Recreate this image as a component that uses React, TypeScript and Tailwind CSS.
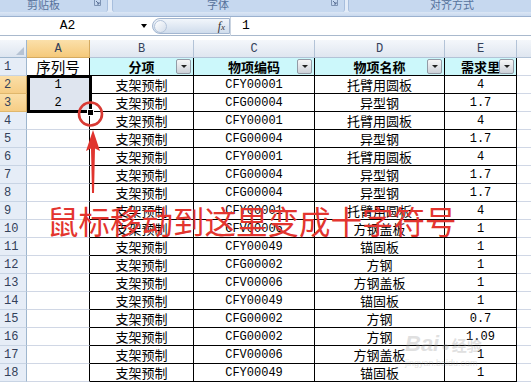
import React from 'react'

const cjk = "[font-family:'Noto_Sans_CJK_SC',sans-serif]"
const mono = "[font-family:'Liberation_Mono','Noto_Sans_CJK_SC',monospace]"

const rows = [
  ['支架预制', 'CFY00001', '托臂用圆板', '4'],
  ['支架预制', 'CFG00004', '异型钢', '1.7'],
  ['支架预制', 'CFY00001', '托臂用圆板', '4'],
  ['支架预制', 'CFG00004', '异型钢', '1.7'],
  ['支架预制', 'CFY00001', '托臂用圆板', '4'],
  ['支架预制', 'CFG00004', '异型钢', '1.7'],
  ['支架预制', 'CFG00004', '异型钢', '1.7'],
  ['支架预制', 'CFY00001', '托臂用圆板', '4'],
  ['支架预制', 'CFV00006', '方钢盖板', '1'],
  ['支架预制', 'CFY00049', '锚固板', '1'],
  ['支架预制', 'CFG00002', '方钢', '1'],
  ['支架预制', 'CFV00006', '方钢盖板', '1'],
  ['支架预制', 'CFY00049', '锚固板', '1'],
  ['支架预制', 'CFG00002', '方钢', '0.7'],
  ['支架预制', 'CFG00002', '方钢', '1.09'],
  ['支架预制', 'CFV00006', '方钢盖板', '1'],
  ['支架预制', 'CFY00049', '锚固板', '1'],
]

const widths = ['w-[104px]', 'w-[121px]', 'w-[130px]', 'w-[72px]']
const isCjk = (s: string) => /[\u4e00-\u9fff]/.test(s)

function Launcher() {
  return (
    <svg width="7" height="6" viewBox="0 0 7 6" className="shrink-0">
      <path d="M0.5 0 V5.5 H6.5 V0" fill="none" stroke="#7d93b3" strokeWidth="1" />
      <path d="M2 1 L5 4 M5 2 V4 H3" fill="none" stroke="#5b7196" strokeWidth="1" />
    </svg>
  )
}

function FilterButton() {
  return (
    <div className="absolute right-[2px] top-[1px] w-[15px] h-[15px] rounded-[2px] border border-[#939ba6] bg-gradient-to-b from-[#f7f7f7] to-[#cdd2d9] flex items-center justify-center">
      <div className="w-0 h-0 border-l-[3px] border-r-[3px] border-t-[3px] border-l-transparent border-r-transparent border-t-[#222]" />
    </div>
  )
}

function RowHeader({ n, selected }: { n: number; selected?: boolean }) {
  return (
    <div
      className={
        'w-[27px] shrink-0 flex items-center pl-[4px] border-r border-b text-[12px] text-[#33415a] ' +
        mono +
        (selected
          ? ' bg-gradient-to-b from-[#fbdfa8] to-[#f6cd85] border-r-[#c9a25c] border-b-[#e0b76c]'
          : ' bg-[#e6edf7] border-r-[#9eb6ce] border-b-[#c8d4e4]')
      }
    >
      {n}
    </div>
  )
}

export default function App() {
  return (
    <div className="relative w-[531px] h-[382px] overflow-hidden bg-white">
      {/* ribbon group labels */}
      <div className={'flex h-[12px] bg-[#e3ecf8] overflow-hidden text-[11px] text-[#56729c] ' + cjk}>
        <div className="w-[108px] shrink-0 flex items-start bg-[#c6d8ef] rounded-br-[3px] border-r border-[#a7bedd]">
          <span className="pl-[27px] -mt-[3px] leading-[14px]">剪贴板</span>
          <span className="ml-auto mr-[6px]">
            <Launcher />
          </span>
        </div>
        <div className="w-[4px] shrink-0" />
        <div className="w-[233px] shrink-0 flex items-start bg-[#c6d8ef] rounded-b-[3px] border-x border-[#a7bedd]">
          <span className="pl-[94px] -mt-[3px] leading-[14px]">字体</span>
          <span className="ml-auto mr-[6px]">
            <Launcher />
          </span>
        </div>
        <div className="w-[3px] shrink-0" />
        <div className="flex-1 flex items-start bg-[#c6d8ef] rounded-bl-[3px] border-l border-[#a7bedd]">
          <span className="pl-[81px] -mt-[3px] leading-[14px]">对齐方式</span>
        </div>
      </div>
      <div className="h-[5px] bg-gradient-to-b from-[#dbe6f5] to-[#c9d9ee] border-b border-[#9bb1cf]" />

      {/* formula bar */}
      <div className="flex items-center h-[19px] border-b border-[#a9b9cd]">
        <div className={'w-[135px] text-center text-[13px] text-black ' + mono}>A2</div>
        <div className="w-0 h-0 ml-[6px] border-l-[3px] border-r-[3px] border-t-[4px] border-l-transparent border-r-transparent border-t-black" />
        <div className="ml-[5px] w-[78px] h-[16px] rounded-l-full border border-[#a3b6d0] bg-gradient-to-b from-[#f2f6fb] to-[#cfdcec] flex items-center">
          <div className="ml-[1px] w-[13px] h-[13px] rounded-full border border-[#b4c4da] bg-gradient-to-br from-white to-[#d4deeb]" />
          <span className="ml-auto mr-[4px] text-[12px] italic text-[#333] [font-family:'Liberation_Serif',serif]">
            f<span className="text-[9px]">x</span>
          </span>
        </div>
        <div className="w-px h-[19px] bg-[#c9d3e0]" />
        <div className={'pl-[11px] text-[13px] text-black ' + mono}>1</div>
      </div>
      <div className="h-[4px]" />

      {/* column headers */}
      <div className={'flex h-[18px] text-[12px] text-[#33415a] ' + mono}>
        <div className="w-[27px] shrink-0 bg-gradient-to-b from-[#f4f7fb] to-[#dde5f0] border-r border-b border-[#9eb6ce] flex items-end justify-end pr-[2px] pb-[2px]">
          <svg width="8" height="8" viewBox="0 0 8 8">
            <path d="M8 0 V8 H0 Z" fill="#b6c3d4" />
          </svg>
        </div>
        <div className="w-[63px] shrink-0 bg-gradient-to-b from-[#fbe0aa] to-[#f5c97a] border-r border-b border-[#d4aa60] flex items-center justify-center">A</div>
        {['B', 'C', 'D', 'E'].map((c, i) => (
          <div
            key={c}
            className={widths[i] + ' shrink-0 bg-gradient-to-b from-[#f4f7fb] to-[#dfe6f0] border-r border-b border-[#b3c3d7] flex items-center justify-center'}
          >
            {c}
          </div>
        ))}
        <div className="flex-1 bg-gradient-to-b from-[#f4f7fb] to-[#dfe6f0] border-b border-[#b3c3d7]" />
      </div>

      {/* row 1: table header */}
      <div className="flex h-[18px]">
        <RowHeader n={1} />
        <div className={'w-[63px] shrink-0 border-r border-black flex items-center justify-center text-[14.5px] text-black ' + cjk}>序列号</div>
        {['分项', '物项编码', '物项名称', '需求里'].map((t, i) => (
          <div
            key={t}
            className={widths[i] + ' relative shrink-0 bg-[#ccf8fb] border-r border-b border-black flex items-center justify-center text-[13px] font-bold text-black ' + cjk}
          >
            {t}
            <FilterButton />
          </div>
        ))}
        <div className="flex-1 border-b border-[#d0d7e5]" />
      </div>

      {/* data rows */}
      {rows.map((r, idx) => {
        const n = idx + 2
        const sel = n === 2 || n === 3
        return (
          <div key={n} className="flex h-[18px]">
            <RowHeader n={n} selected={sel} />
            <div
              className={
                'w-[63px] shrink-0 border-r border-b border-r-black flex items-center justify-center text-[12px] text-black ' +
                mono +
                (sel ? ' bg-[#dfe5ef] border-b-[#dfe5ef]' : ' border-b-[#d0d7e5]')
              }
            >
              {n === 2 ? '1' : n === 3 ? '2' : ''}
            </div>
            {r.map((t, i) => (
              <div
                key={i}
                className={
                  widths[i] +
                  ' shrink-0 border-r border-b border-black flex items-center justify-center text-black ' +
                  (isCjk(t) ? 'text-[13px] ' + cjk : 'text-[12px] ' + mono)
                }
              >
                {t}
              </div>
            ))}
            <div className="flex-1 border-b border-[#d0d7e5]" />
          </div>
        )
      })}

      {/* selection A2:A3 with fill handle */}
      <div className="absolute left-[27px] top-[75px] w-[65px] h-[38px] border-[3px] border-black" />
      <div className="absolute left-[87px] top-[109px] w-[7px] h-[7px] bg-black border border-white" />

      {/* annotation */}
      <svg className="absolute left-[76px] top-[100px]" width="30" height="30" viewBox="0 0 30 30">
        <circle cx="14.5" cy="14" r="11.5" fill="none" stroke="#d83a34" strokeWidth="2.6" />
      </svg>
      <svg className="absolute left-[84px] top-[129px]" width="18" height="66" viewBox="0 0 18 66">
        <path d="M9 1 L16 22 L11 19.5 L10 64 L8 64 L7 19.5 L2 22 Z" fill="#e0342e" />
      </svg>
      <div className={'absolute left-[47px] top-[205px] text-[31.5px] leading-none text-[#e3352f] whitespace-nowrap ' + cjk}>
        鼠标移动到这里变成十字符号
      </div>

      {/* watermark */}
      <div className="absolute left-[405px] top-[327px] text-[#9a9a9a] opacity-30 pointer-events-none">
        <div className="flex items-baseline gap-[2px]">
          <span className="text-[22px] font-bold italic [font-family:'Liberation_Sans',sans-serif]">Bai</span>
          <span className="text-[14px]">●</span>
          <span className={'text-[15px] font-bold ' + cjk}>经验</span>
        </div>
        <div className="text-[9px] -mt-[3px] [font-family:'Liberation_Sans',sans-serif]">jingyan.baidu.com</div>
      </div>
    </div>
  )
}
